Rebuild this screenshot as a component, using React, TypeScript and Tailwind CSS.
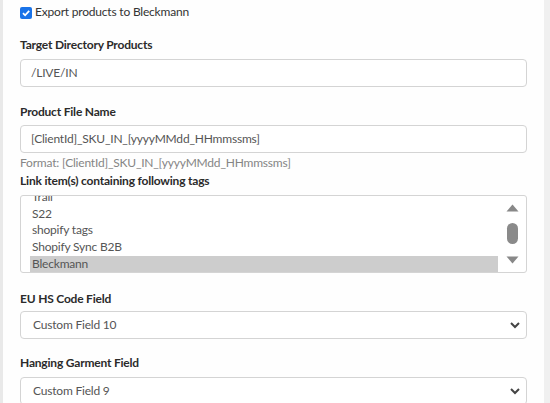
import React from "react";

const font = { fontFamily: 'Lato, "Open Sans", sans-serif' };

function Label({ children, className = "" }: { children: React.ReactNode; className?: string }) {
  return (
    <div className={`text-[12px] tracking-[-0.2px] leading-[18px] font-bold text-[#2b2b2b] ${className}`}>
      {children}
    </div>
  );
}

function TextInput({ value }: { value: string }) {
  return (
    <div className="h-[28px] border border-[#d4d4d4] rounded-[4px] bg-white flex items-center pl-[10px] text-[12px] tracking-[-0.2px] text-[#555]">
      {value}
    </div>
  );
}

function Select({ value }: { value: string }) {
  return (
    <div className="h-[28px] border border-[#d4d4d4] rounded-[4px] bg-white flex items-center pl-[12px] pr-[4px] text-[12px] tracking-[-0.2px] text-[#555]">
      <span className="flex-1">{value}</span>
      <svg width="12" height="8" viewBox="0 0 12 8" className="mr-[1px]">
        <path d="M2 2 L6 6 L10 2" fill="none" stroke="#444" strokeWidth="2" />
      </svg>
    </div>
  );
}

const tags = ["Trail", "S22", "shopify tags", "Shopify Sync B2B", "Bleckmann"];

export default function App() {
  return (
    <div className="w-[550px] h-[403px] overflow-hidden flex bg-[#f0f0f0]" style={font}>
      <div className="w-[3px] bg-[#e9e9e9]" />
      <div className="w-[541px] bg-[#fefefe] pl-[17px] pr-[17px] pt-[3px]">
        {/* export toggle */}
        <div className="flex items-center h-[18px] text-[12px] tracking-[-0.2px] text-[#333]">
          <span className="w-[12px] h-[12px] rounded-[2px] bg-[#1a73e8] flex items-center justify-center mr-[3px] mt-[1px]">
            <svg width="10" height="10" viewBox="0 0 10 10">
              <path d="M2 5.2 L4.1 7.3 L8.2 2.8" fill="none" stroke="#fff" strokeWidth="1.8" />
            </svg>
          </span>
          Export products to Bleckmann
        </div>

        <Label className="mt-[15px] mb-[5px]">Target Directory Products</Label>
        <TextInput value="/LIVE/IN" />

        <Label className="mt-[16px] mb-[4px]">Product File Name</Label>
        <TextInput value="[ClientId]_SKU_IN_[yyyyMMdd_HHmmssms]" />

        <div className="mt-[1px] text-[12px] tracking-[-0.2px] leading-[18px] text-[#858585]">
          Format: [ClientId]_SKU_IN_[yyyyMMdd_HHmmssms]
        </div>
        <Label className="mb-[5px]">Link item(s) containing following tags</Label>

        {/* tags list */}
        <div className="h-[78px] border border-[#d4d4d4] rounded-[3px] bg-white flex overflow-hidden">
          <div className="flex-1 pl-[9px] overflow-hidden">
            <div className="-mt-[7px]">
              {tags.map((t) => (
                <div
                  key={t}
                  className={`h-[16.7px] leading-[16.7px] pl-[2px] text-[12px] tracking-[-0.2px] text-[#555] ${
                    t === "Bleckmann" ? "bg-[#cdcdcd] text-[#333]" : ""
                  }`}
                >
                  {t}
                </div>
              ))}
            </div>
          </div>
          <div className="w-[28px] flex flex-col items-center pt-[8px]">
            <svg width="13" height="8" viewBox="0 0 13 8">
              <path d="M6.5 0.5 L12.5 7.5 L0.5 7.5 Z" fill="#888" />
            </svg>
            <div className="w-[11px] h-[21px] rounded-full bg-[#8a8a8a] mt-[11px]" />
            <svg width="13" height="8" viewBox="0 0 13 8" className="mt-[12px]">
              <path d="M0.5 0.5 L12.5 0.5 L6.5 7.5 Z" fill="#888" />
            </svg>
          </div>
        </div>

        <Label className="mt-[17px] mb-[3px]">EU HS Code Field</Label>
        <Select value="Custom Field 10" />

        <Label className="mt-[15px] mb-[5px]">Hanging Garment Field</Label>
        <Select value="Custom Field 9" />
      </div>
      <div className="flex-1 bg-[#f0f0f0]" />
    </div>
  );
}
